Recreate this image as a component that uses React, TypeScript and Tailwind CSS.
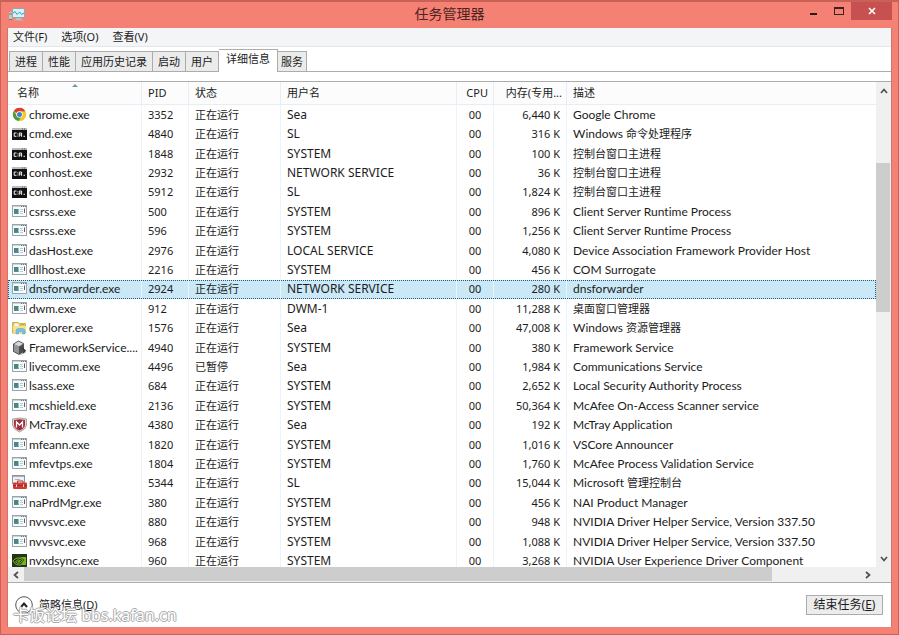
import type { ReactNode } from "react";

type IconKind = "chrome" | "console" | "exe" | "explorer" | "cube" | "mcafee" | "toolbox" | "nvidia";

interface Process {
  icon: IconKind;
  name: string;
  pid: string;
  status: string;
  user: string;
  memory: string;
  description: string;
  selected?: boolean;
}

const RUNNING = "正在运行";

const processes: Process[] = [
  { icon: "chrome", name: "chrome.exe", pid: "3352", status: RUNNING, user: "Sea", memory: "6,440", description: "Google Chrome" },
  { icon: "console", name: "cmd.exe", pid: "4840", status: RUNNING, user: "SL", memory: "316", description: "Windows 命令处理程序" },
  { icon: "console", name: "conhost.exe", pid: "1848", status: RUNNING, user: "SYSTEM", memory: "100", description: "控制台窗口主进程" },
  { icon: "console", name: "conhost.exe", pid: "2932", status: RUNNING, user: "NETWORK SERVICE", memory: "36", description: "控制台窗口主进程" },
  { icon: "console", name: "conhost.exe", pid: "5912", status: RUNNING, user: "SL", memory: "1,824", description: "控制台窗口主进程" },
  { icon: "exe", name: "csrss.exe", pid: "500", status: RUNNING, user: "SYSTEM", memory: "896", description: "Client Server Runtime Process" },
  { icon: "exe", name: "csrss.exe", pid: "596", status: RUNNING, user: "SYSTEM", memory: "1,256", description: "Client Server Runtime Process" },
  { icon: "exe", name: "dasHost.exe", pid: "2976", status: RUNNING, user: "LOCAL SERVICE", memory: "4,080", description: "Device Association Framework Provider Host" },
  { icon: "exe", name: "dllhost.exe", pid: "2216", status: RUNNING, user: "SYSTEM", memory: "456", description: "COM Surrogate" },
  { icon: "exe", name: "dnsforwarder.exe", pid: "2924", status: RUNNING, user: "NETWORK SERVICE", memory: "280", description: "dnsforwarder", selected: true },
  { icon: "exe", name: "dwm.exe", pid: "912", status: RUNNING, user: "DWM-1", memory: "11,288", description: "桌面窗口管理器" },
  { icon: "explorer", name: "explorer.exe", pid: "1576", status: RUNNING, user: "Sea", memory: "47,008", description: "Windows 资源管理器" },
  { icon: "cube", name: "FrameworkService....", pid: "4940", status: RUNNING, user: "SYSTEM", memory: "380", description: "Framework Service" },
  { icon: "exe", name: "livecomm.exe", pid: "4496", status: "已暂停", user: "Sea", memory: "1,984", description: "Communications Service" },
  { icon: "exe", name: "lsass.exe", pid: "684", status: RUNNING, user: "SYSTEM", memory: "2,652", description: "Local Security Authority Process" },
  { icon: "exe", name: "mcshield.exe", pid: "2136", status: RUNNING, user: "SYSTEM", memory: "50,364", description: "McAfee On-Access Scanner service" },
  { icon: "mcafee", name: "McTray.exe", pid: "4380", status: RUNNING, user: "Sea", memory: "192", description: "McTray Application" },
  { icon: "exe", name: "mfeann.exe", pid: "1820", status: RUNNING, user: "SYSTEM", memory: "1,016", description: "VSCore Announcer" },
  { icon: "exe", name: "mfevtps.exe", pid: "1804", status: RUNNING, user: "SYSTEM", memory: "1,760", description: "McAfee Process Validation Service" },
  { icon: "toolbox", name: "mmc.exe", pid: "5344", status: RUNNING, user: "SL", memory: "15,044", description: "Microsoft 管理控制台" },
  { icon: "exe", name: "naPrdMgr.exe", pid: "380", status: RUNNING, user: "SYSTEM", memory: "456", description: "NAI Product Manager" },
  { icon: "exe", name: "nvvsvc.exe", pid: "880", status: RUNNING, user: "SYSTEM", memory: "948", description: "NVIDIA Driver Helper Service, Version 337.50" },
  { icon: "exe", name: "nvvsvc.exe", pid: "968", status: RUNNING, user: "SYSTEM", memory: "1,088", description: "NVIDIA Driver Helper Service, Version 337.50" },
  { icon: "nvidia", name: "nvxdsync.exe", pid: "960", status: RUNNING, user: "SYSTEM", memory: "3,268", description: "NVIDIA User Experience Driver Component" },
];

const iconShapes: Record<IconKind, ReactNode> = {
  chrome: (
    <>
      <circle cx="7.500" cy="7.500" r="6.600" fill="#f5c723" />
      <path d="M7.500 7.500 1.700 4.300A6.600 6.600 0 0 1 13.300 4.300L7.500 4.500Z" fill="#d9412f" />
      <path d="M1.700 4.300A6.600 6.600 0 0 0 6.700 14L9.800 9 7.500 7.500 4.800 8.800Z" fill="#3f9f4c" />
      <circle cx="7.500" cy="7.500" r="3.200" fill="#fff" />
      <circle cx="7.500" cy="7.500" r="2.500" fill="#4380c8" />
    </>
  ),
  console: (
    <>
      <rect x="0" y="2" width="15" height="12" fill="#111" />
      <rect x="0" y="2" width="15" height="2" fill="#b9bdc0" />
      <path d="M10 3h1M12 3h1" stroke="#555" />
      <path d="M4.500 7H2.200V10.300H4.500M5.800 7.500V8.300M5.800 9.600V10.400M7.300 10.800V7H9.600V10.800M7.300 9H9.600M11.500 10.300H13" stroke="#f2f2f2" fill="none" />
    </>
  ),
  exe: (
    <>
      <rect x="0.500" y="1.500" width="14" height="11" fill="#f8fafb" stroke="#9aa4aa" />
      <path d="M1 2.500H14" stroke="#cdd4d8" />
      <path d="M9 2.500H10M11 2.500H12M13 2.500H14" stroke="#68747a" />
      <rect x="2" y="5" width="4.500" height="5" fill="#438b80" />
      <path d="M2 9.500H6.500" stroke="#5b86b5" />
      <path d="M8 5.500H11M8 7.500H11M8 9.500H11" stroke="#c3cace" />
      <path d="M12.500 4.500V9" stroke="#52616d" />
    </>
  ),
  explorer: (
    <>
      <path d="M0.500 2.500H6L7.500 3.500H13.500V13H0.500Z" fill="#e9c561" stroke="#d2b052" />
      <path d="M2.500 3.500H6.500V6H2.500Z" fill="#fff" />
      <path d="M8 4.500H12" stroke="#8fc27d" />
      <path d="M0.500 6H14.500L13.500 13H1.500Z" fill="#f7e28b" />
      <path d="M4 14V11Q4 8.500 6.500 8.500H10.500Q13 8.500 13 11V14H10.500V11.500H6.500V14Z" fill="#74c3e6" stroke="#4aa2d0" strokeWidth="0.500" />
    </>
  ),
  cube: (
    <>
      <path d="M5 13 12 10 14.500 12 9 15Z" fill="#b9b9b9" />
      <path d="M1.500 4 6.500 1 11.500 3.500V11L7 14.500 1.500 11.500Z" fill="#4d4f50" />
      <path d="M1.500 4 6.500 1 11.500 3.500 7 6.500Z" fill="#d7d9da" />
      <path d="M1.500 4 7 6.500V14.500L1.500 11.500Z" fill="#929697" />
      <path d="M1.500 4 6.500 1 11.500 3.500V11L7 14.500 1.500 11.500Z" fill="none" stroke="#333" strokeWidth="0.700" />
      <path d="M10 8 13 10.500 11 13" stroke="#333" fill="none" strokeWidth="1.500" />
    </>
  ),
  mcafee: (
    <>
      <path d="M0.500 2 7.500 1 14.500 2V8Q14 12.500 7.500 15 1 12.500 0.500 8Z" fill="#dcdcdc" stroke="#8d8383" strokeWidth="0.700" />
      <path d="M2 3 7.500 2.200 13 3V8Q12.500 11.500 7.500 13.500 2.500 11.500 2 8Z" fill="#a32a38" />
      <path d="M4.500 10.500V4.800L7.500 8 10.500 4.800V10.500" stroke="#fff" strokeWidth="1.300" fill="none" />
    </>
  ),
  toolbox: (
    <>
      <rect x="0.500" y="0.500" width="12" height="8" fill="#eef1f3" stroke="#8c959b" />
      <path d="M1 1.500H12M3 4.500H8" stroke="#a9b2b8" />
      <path d="M5.500 8V6H11V8" stroke="#a33" fill="none" />
      <rect x="1" y="7.500" width="14" height="6.500" rx="1" fill="#cf3a34" />
      <path d="M1 10.500H15" stroke="#96221f" strokeWidth="0.700" />
      <path d="M4.500 9.500V12M11.500 9.500V12" stroke="#f1d6d6" />
    </>
  ),
  nvidia: (
    <>
      <rect x="0" y="1" width="15" height="14" fill="#26331c" />
      <path d="M6 4H14V12H6Z" fill="#74b71b" />
      <path d="M1 8Q5 2.500 11 7 7 12.500 3.500 9 5 5.500 8.500 7.500 7 10 5.500 8.500M1 8Q4 13.500 10 11.500" stroke="#26331c" strokeWidth="2" fill="none" />
      <path d="M1 8Q5 2.500 11 7 7 12.500 3.500 9 5 5.500 8.500 7.500 7 10 5.500 8.500M1 8Q4 13.500 10 11.500" stroke="#80c41c" strokeWidth="0.900" fill="none" />
    </>
  ),
};

function ProcessIcon({ kind }: { kind: IconKind }) {
  return (
    <svg viewBox="0 0 15 16" className="h-4 w-[15px] shrink-0" aria-hidden="true">
      {iconShapes[kind]}
    </svg>
  );
}

function Chevron({ d }: { d: string }) {
  return (
    <svg viewBox="0 0 8 8" className="size-2" aria-hidden="true">
      <path d={d} fill="none" stroke="#505050" strokeWidth="1.700" />
    </svg>
  );
}

const UP = "M1 6 4 2.500 7 6";
const DOWN = "M1 2 4 5.500 7 2";
const LEFT = "M6 1 2.500 4 6 7";
const RIGHT = "M2 1 5.500 4 2 7";

const menus = ["文件(F)", "选项(O)", "查看(V)"];

function Tab({ label, active = false }: { label: string; active?: boolean }) {
  return (
    <button
      type="button"
      role="tab"
      aria-selected={active}
      className={
        active
          ? "-mb-px h-[23px] border border-b-0 border-l-0 border-[#acacac] bg-white px-[7px] pb-1"
          : "h-5 border border-b-0 border-l-0 border-[#acacac] bg-[#ebebeb] px-[5px] first:border-l last:px-[3px]"
      }
    >
      {label}
    </button>
  );
}

const headCell = "border-r border-[#e6edf5] p-0 font-normal";
const cell = "border-r border-[#edf3fa] py-0";
const latin = "font-['Lato','Noto_Sans_CJK_SC',sans-serif] text-xs leading-4 [font-variant-ligatures:none]";

function TitleBar() {
  return (
    <header className="flex h-[26px] shrink-0 items-start">
      <div className="flex flex-1 pt-1">
        <svg viewBox="0 0 16 16" className="ml-0.5 size-4" aria-hidden="true">
          <rect x="3.500" y="2.500" width="12" height="9" fill="#d8f1f8" stroke="#9aa5a9" />
          <path d="M4 7 6 5.500 8 8.500 10.500 6 12.500 8.500 15 7" fill="none" stroke="#3a9cc0" />
          <path d="M7 12H12V13.500H14V14.500H5V13.500H7Z" fill="#b6bfc1" />
          <rect x="0" y="6" width="3" height="8" fill="#c0c9c7" />
          <path d="M0 8H3M0 13.500H3" stroke="#65806b" />
        </svg>
      </div>
      <h1 className="pt-0.5 text-sm leading-5 text-[#4c2422]">任务管理器</h1>
      <div className="flex flex-1 justify-end">
        <button type="button" aria-label="最小化" className="flex h-[18px] w-[25px] items-end justify-center pb-[5px]">
          <span className="h-0.5 w-[7px] bg-[#2b1918]" />
        </button>
        <button type="button" aria-label="最大化" className="flex h-[18px] w-[25px] items-end justify-center pb-[5px]">
          <span className="h-2 w-2.5 border border-t-2 border-[#3b2220]" />
        </button>
        <button type="button" aria-label="关闭" className="flex h-[18px] w-[41px] items-center justify-center bg-[#c75050]">
          <svg viewBox="0 0 8 8" className="size-2">
            <path d="M1 1 7 7M7 1 1 7" stroke="#fff" strokeWidth="1.600" />
          </svg>
        </button>
      </div>
    </header>
  );
}

// Latin words are set one size up from the Chinese ones so that both look equally large.
function MixedText({ text }: { text: string }) {
  const start = text.search(/[\u4e00-\u9fff]/);
  if (start < 0) return <span className={latin}>{text}</span>;
  return (
    <>
      {start > 0 && <span className={latin}>{text.slice(0, start)}</span>}
      {text.slice(start)}
    </>
  );
}

function ProcessTable() {
  return (
    <table className="h-[489px] w-full table-fixed border-separate border-spacing-0 whitespace-nowrap">
      <colgroup>
        <col className="w-[134px]" />
        <col className="w-[47px]" />
        <col className="w-[92px]" />
        <col className="w-[176px]" />
        <col className="w-[37px]" />
        <col className="w-[73px]" />
        <col />
      </colgroup>
      <thead>
        <tr className="h-[23px] bg-[#fcfcfc] text-left">
          <th scope="col" className={`${headCell} relative border-b pl-[9px]`}>
            名称
            <svg viewBox="0 0 6 3" className="absolute top-0.5 left-16 h-[3px] w-1.5" aria-hidden="true">
              <path d="M0 3 3 0 6 3Z" fill="#6f98ad" />
            </svg>
          </th>
          <th scope="col" className={`${headCell} border-b pl-1.5`}>PID</th>
          <th scope="col" className={`${headCell} border-b pl-1.5`}>状态</th>
          <th scope="col" className={`${headCell} border-b pl-1.5`}>用户名</th>
          <th scope="col" className={`${headCell} border-b pr-[5px] text-right`}>CPU</th>
          <th scope="col" className={`${headCell} border-b pr-1 text-right`}>内存(专用...</th>
          <th scope="col" className={`${headCell} border-r-0 border-b pl-1.5`}>描述</th>
        </tr>
      </thead>
      <tbody>
        {processes.map((p) => (
          <tr
            key={p.name + p.pid}
            aria-selected={p.selected}
            className={p.selected ? "bg-[#cbe8f6] outline-1 -outline-offset-1 outline-[#1b5c7c] outline-dotted" : ""}
          >
            <td className={`${cell} pl-1`}>
              <div className={`flex h-4 items-center gap-0.5 ${latin}`}>
                <ProcessIcon kind={p.icon} />
                {p.name}
              </div>
            </td>
            <td className={`${cell} pl-1.5`}>{p.pid}</td>
            <td className={`${cell} pl-1.5`}>{p.status}</td>
            <td className={`${cell} pl-1.5 text-xs`}>{p.user}</td>
            <td className={`${cell} text-center`}>00</td>
            <td className={`${cell} pr-1.5 text-right`}>{p.memory} K</td>
            <td className="py-0 pl-1.5">
              <MixedText text={p.description} />
            </td>
          </tr>
        ))}
      </tbody>
    </table>
  );
}

export default function App() {
  return (
    <div className="relative flex h-screen flex-col border-t-2 border-r border-b border-l border-[#c96156] bg-[#f58074] px-1.5 pb-[7px] font-['Noto_Sans','Noto_Sans_CJK_SC',sans-serif] text-[11px] leading-4 text-[#1c1c1c]">
      <TitleBar />
      <main className="flex min-h-0 flex-1 flex-col border-x border-[#c9776f] bg-white">
        <nav className="flex h-[19px] shrink-0 gap-3.5 border-b border-[#e4e6e9] bg-[#f4f5f7] pl-[5px]">
          {menus.map((m) => (
            <button key={m} type="button">
              {m}
            </button>
          ))}
        </nav>
        <div role="tablist" className="flex h-[25px] shrink-0 items-end border-b border-[#acacac] pl-px">
          <Tab label="进程" />
          <Tab label="性能" />
          <Tab label="应用历史记录" />
          <Tab label="启动" />
          <Tab label="用户" />
          <Tab label="详细信息" active />
          <Tab label="服务" />
        </div>
        <section className="mt-[9px] flex min-h-0 flex-1 flex-col border-y border-[#acacac]">
          <div className="flex min-h-0 flex-1">
            <div className="min-w-0 flex-1 overflow-hidden">
              <ProcessTable />
            </div>
            <div className="flex w-[15px] shrink-0 flex-col bg-[#f0f0f0]">
              <button type="button" aria-label="向上滚动" className="flex h-[18px] items-center justify-center">
                <Chevron d={UP} />
              </button>
              <div className="flex flex-1 flex-col">
                <div className="flex-[63]" />
                <div className="mr-px flex-[149] bg-[#cdcdcd]" />
                <div className="flex-[238]" />
              </div>
              <button type="button" aria-label="向下滚动" className="flex h-4 items-center justify-center">
                <Chevron d={DOWN} />
              </button>
            </div>
          </div>
          <div className="flex h-[15px] shrink-0 bg-[#f0f0f0]">
            <button type="button" aria-label="向左滚动" className="flex w-4 items-center justify-center">
              <Chevron d={LEFT} />
            </button>
            <div className="flex flex-1 pb-px">
              <div className="flex-[749] bg-[#cdcdcd]" />
              <div className="flex-[88]" />
            </div>
            <button type="button" aria-label="向右滚动" className="mr-[15px] flex w-4 items-center justify-center">
              <Chevron d={RIGHT} />
            </button>
          </div>
        </section>
        <footer className="flex h-11 shrink-0 items-center justify-between pr-2 pl-[7px]">
          <button type="button" className="flex items-center gap-1.5 text-[11px]">
            <svg viewBox="0 0 18 18" className="size-[18px]" aria-hidden="true">
              <circle cx="9" cy="9" r="8.300" fill="#fff" stroke="#555" />
              <path d="M6 11 9 7.500 12 11" fill="none" stroke="#222" strokeWidth="2" />
            </svg>
            <span>
              简略信息(<u>D</u>)
            </span>
          </button>
          <button type="button" className="h-5 w-[77px] border border-[#acacac] bg-[#ececec] text-xs">
            结束任务(<u>E</u>)
          </button>
        </footer>
      </main>
      <p className="pointer-events-none absolute bottom-[9px] left-3 text-base leading-5 text-white [text-shadow:1px_0_#aaa,-1px_0_#aaa,0_1px_#aaa,0_-1px_#aaa]">
        卡饭论坛 bbs.kafan.cn
      </p>
    </div>
  );
}
